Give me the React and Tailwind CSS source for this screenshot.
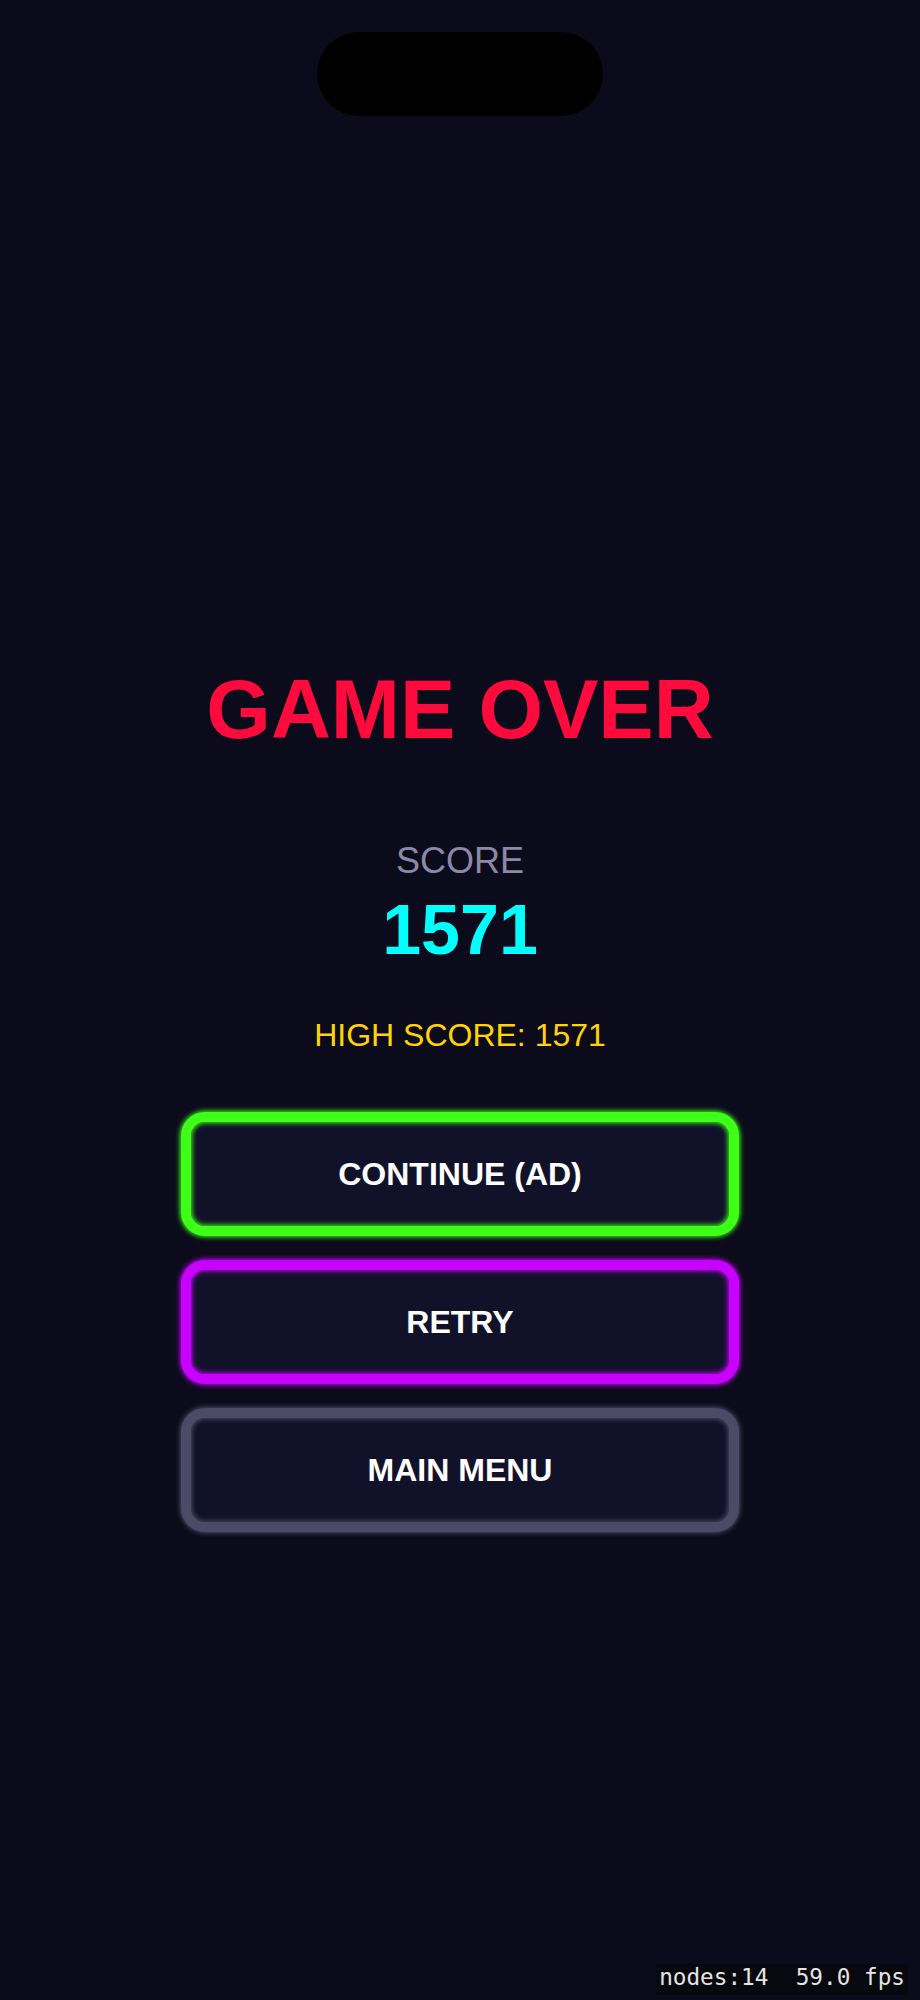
const buttons = [
  { label: 'CONTINUE (AD)', ring: 'border-[#3dff17] shadow-[0_0_5px_1px_#3dff17,inset_0_0_5px_1px_#3dff17]' },
  { label: 'RETRY', ring: 'border-[#c800ff] shadow-[0_0_5px_1px_#c800ff,inset_0_0_5px_1px_#c800ff]' },
  { label: 'MAIN MENU', ring: 'border-[#4b4b66] shadow-[0_0_5px_1px_#4b4b66,inset_0_0_5px_1px_#4b4b66]' },
];

export default function App() {
  const score = 1571;
  const best = 1571;

  return (
    <div className="relative w-full h-[2000px] overflow-hidden bg-[#0b0b1b] font-['Liberation_Sans',Arial,sans-serif]">
      {/* notch */}
      <div className="flex justify-center pt-[32px]">
        <div className="w-[286px] h-[84px] rounded-full bg-black" />
      </div>

      <div className="flex flex-col items-center">
        <h1 className="mt-[552px] text-[83px] leading-none font-bold text-[#ff0a3c]">GAME OVER</h1>
        <div className="mt-[92px] text-[36px] leading-none text-[#8b89a8]">SCORE</div>
        <div className="mt-[16px] text-[70px] leading-none font-bold text-[#00ffff]">{score}</div>
        <div className="mt-[54px] text-[32px] leading-none text-[#ffd400]">HIGH SCORE: {best}</div>

        <div className="mt-[61px] flex flex-col gap-[24px]">
          {buttons.map(b => (
            <button
              key={b.label}
              className={`w-[558px] h-[124px] rounded-[24px] border-[10px] bg-[#11122a] text-white text-[32px] font-bold leading-none ${b.ring}`}
            >
              {b.label}
            </button>
          ))}
        </div>
      </div>

      {/* debug stats */}
      <div className="absolute right-[12px] bottom-[5px] px-[3px] pt-[2px] pb-[6px] bg-[#08080f] text-[#e4e4e4] text-[22.7px] leading-none whitespace-pre font-['DejaVu_Sans_Mono',monospace]">
        {'nodes:14  59.0 fps'}
      </div>
    </div>
  );
}
